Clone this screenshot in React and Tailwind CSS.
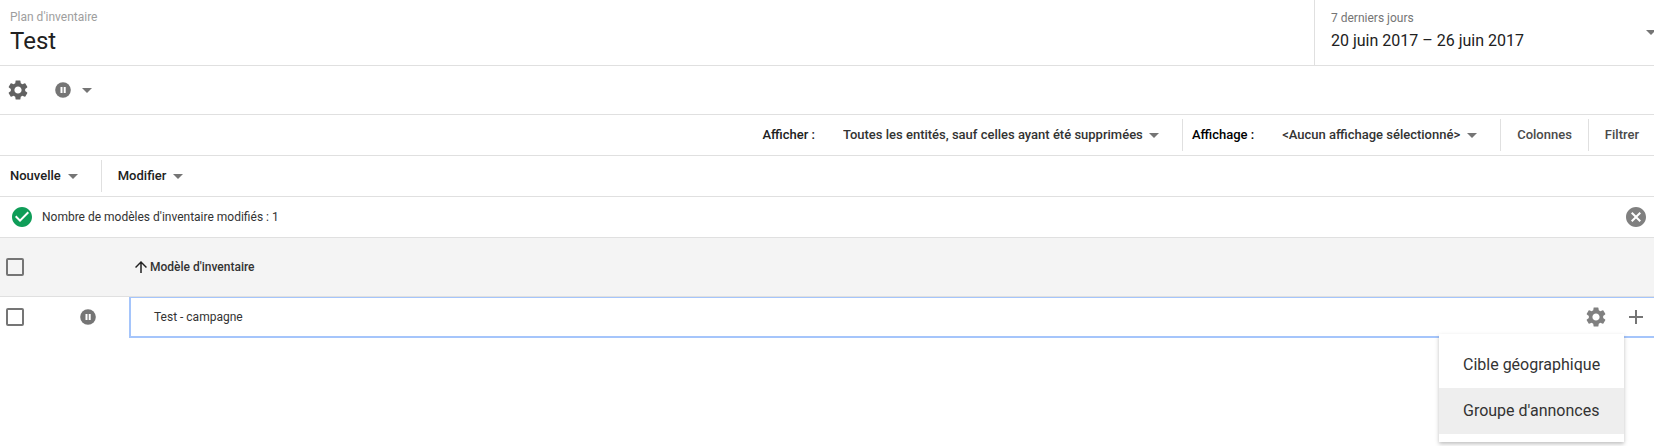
import { useState } from 'react';
import { MdAdd, MdArrowUpward, MdCancel, MdCheckCircle, MdSettings } from 'react-icons/md';

const menuItems = ['Cible géographique', "Groupe d'annonces"];

const Caret = ({ className = '' }) => (
    <svg viewBox="0 0 10 5" className={`w-[10px] h-[5px] shrink-0 pointer-events-none fill-[#757575] ${className}`} aria-hidden="true">
        <path d="M0 0h10L5 5z" />
    </svg>
);

const PauseIcon = () => (
    <svg viewBox="0 0 16 16" className="w-4 h-4 shrink-0" aria-hidden="true">
        <circle cx="8" cy="8" r="7.8" fill="#757575" />
        <path d="M5.5 5h2v6h-2zM8.7 5h2v6h-2z" fill="#fff" />
    </svg>
);

const Separator = () => <span className="w-px h-8 bg-[#e0e0e0]" />;

const Checkbox = ({ label, checked, onChange }) => (
    <input
        type="checkbox"
        aria-label={label}
        checked={checked}
        onChange={onChange}
        className="block ml-1.5 size-[18px] appearance-none rounded-xs border-2 border-[#757575] checked:bg-[#757575]"
    />
);

export default function App() {
    const [selected, setSelected] = useState(false);
    const [activeItem, setActiveItem] = useState(menuItems[1]);
    const [noticeOpen, setNoticeOpen] = useState(true);

    const toggleSelected = () => setSelected((prev) => !prev);

    return (
        <div className="w-full overflow-x-hidden bg-white font-['Roboto',sans-serif] text-[13px] text-[#212121] min-h-screen">
            <header className="flex border-b border-[#e0e0e0]">
                <div className="flex-1 pl-2.5 pt-2 pb-2">
                    <p className="text-xs leading-[18px] text-[#9e9e9e]">Plan d'inventaire</p>
                    <h1 className="text-2xl leading-[31px]">Test</h1>
                </div>
                <div className="flex items-center w-[340px] border-l border-[#e0e0e0] pl-4">
                    <div className="flex-1 pb-0.5">
                        <p className="text-xs leading-[18px] text-[#757575]">7 derniers jours</p>
                        <p className="text-base leading-7">20 juin 2017 – 26 juin 2017</p>
                    </div>
                    <button type="button" aria-label="Choisir la période" className="-mr-0.5">
                        <Caret />
                    </button>
                </div>
            </header>

            <div className="flex items-center h-[49px] pl-1.5 border-b border-[#e0e0e0]">
                <button type="button" aria-label="Paramètres">
                    <MdSettings className="size-6 text-[#616161]" />
                </button>
                <button type="button" aria-label="État" className="flex items-center gap-[11px] ml-[25px]">
                    <PauseIcon />
                    <Caret />
                </button>
            </div>

            <div className="flex items-center justify-end h-[41px] pr-[15px] border-b border-[#e0e0e0] font-medium">
                <label htmlFor="entities" className="mr-7">Afficher :</label>
                <div className="flex items-center gap-1.5 mr-[23px] text-[#333333]">
                    <select id="entities" className="appearance-none bg-transparent">
                        <option>Toutes les entités, sauf celles ayant été supprimées</option>
                    </select>
                    <Caret />
                </div>
                <Separator />
                <label htmlFor="view" className="ml-[9px] mr-7 text-black">Affichage :</label>
                <div className="flex items-center gap-1.5 mr-[23px] text-[#333333]">
                    <select id="view" className="appearance-none bg-transparent">
                        <option>&lt;Aucun affichage sélectionné&gt;</option>
                    </select>
                    <Caret />
                </div>
                <Separator />
                <button type="button" className="px-4 text-[#4a4a4a]">Colonnes</button>
                <Separator />
                <button type="button" className="pl-4 text-[#4a4a4a]">Filtrer</button>
            </div>

            <div className="flex items-center h-[41px] pl-2.5 border-b border-[#e0e0e0] font-medium">
                <button type="button" className="flex items-center gap-[7px] mr-[23px]">
                    Nouvelle
                    <Caret />
                </button>
                <Separator />
                <button type="button" className="flex items-center gap-[7px] ml-4">
                    Modifier
                    <Caret />
                </button>
            </div>

            {noticeOpen && (
                <div role="status" className="flex items-center h-[41px] pl-2.5 pr-1.5 border-b border-[#e0e0e0]">
                    <MdCheckCircle className="size-6 text-[#0f9d58]" />
                    <p className="flex-1 ml-2 text-xs text-[#333333]">Nombre de modèles d'inventaire modifiés : 1</p>
                    <button type="button" aria-label="Fermer" onClick={() => setNoticeOpen(false)}>
                        <MdCancel className="size-6 text-[#808080]" />
                    </button>
                </div>
            )}

            <table className="w-full table-fixed border-separate border-spacing-0 text-xs text-[#333333]">
                <colgroup>
                    <col className="w-12" />
                    <col className="w-[81px]" />
                    <col />
                </colgroup>
                <thead>
                    <tr className="h-[59px] bg-[#f4f4f4]">
                        <th className="border-b border-[#e0e0e0]">
                            <Checkbox label="Tout sélectionner" checked={selected} onChange={toggleSelected} />
                        </th>
                        <th className="border-b border-[#e0e0e0]" />
                        <th className="border-b border-[#e0e0e0] pl-[3px] text-left font-medium" aria-sort="ascending">
                            <button type="button" className="flex items-center">
                                <MdArrowUpward className="size-[18px] text-[#212121]" />
                                Modèle d'inventaire
                            </button>
                        </th>
                    </tr>
                </thead>
                <tbody>
                    <tr className="h-[41px]">
                        <td className="pb-0.5">
                            <Checkbox label="Test - campagne" checked={selected} onChange={toggleSelected} />
                        </td>
                        <td className="pl-8 pb-0.5">
                            <PauseIcon />
                        </td>
                        <td className="border-l-2 border-t border-b-2 border-[#a5c5fb] pl-[23px] pr-1.5">
                            <div className="relative flex items-center">
                                <span className="flex-1">Test - campagne</span>
                                <button type="button" aria-label="Paramètres du modèle" className="mr-4">
                                    <MdSettings className="size-6 text-[#808080]" />
                                </button>
                                <button type="button" aria-label="Ajouter">
                                    <MdAdd className="size-6 text-[#757575]" />
                                </button>
                                <ul
                                    role="menu"
                                    className="absolute top-[29px] right-6 w-[185px] py-2 bg-white text-base shadow-[0_2px_4px_rgba(0,0,0,0.25)]"
                                >
                                    {menuItems.map((item) => (
                                        <li key={item} role="none">
                                            <button
                                                type="button"
                                                role="menuitem"
                                                onMouseEnter={() => setActiveItem(item)}
                                                className={`w-full h-[46px] pl-6 text-left whitespace-nowrap ${
                                                    activeItem === item ? 'bg-[#eeeeee]' : 'bg-white'
                                                }`}
                                            >
                                                {item}
                                            </button>
                                        </li>
                                    ))}
                                </ul>
                            </div>
                        </td>
                    </tr>
                </tbody>
            </table>
        </div>
    );
}
